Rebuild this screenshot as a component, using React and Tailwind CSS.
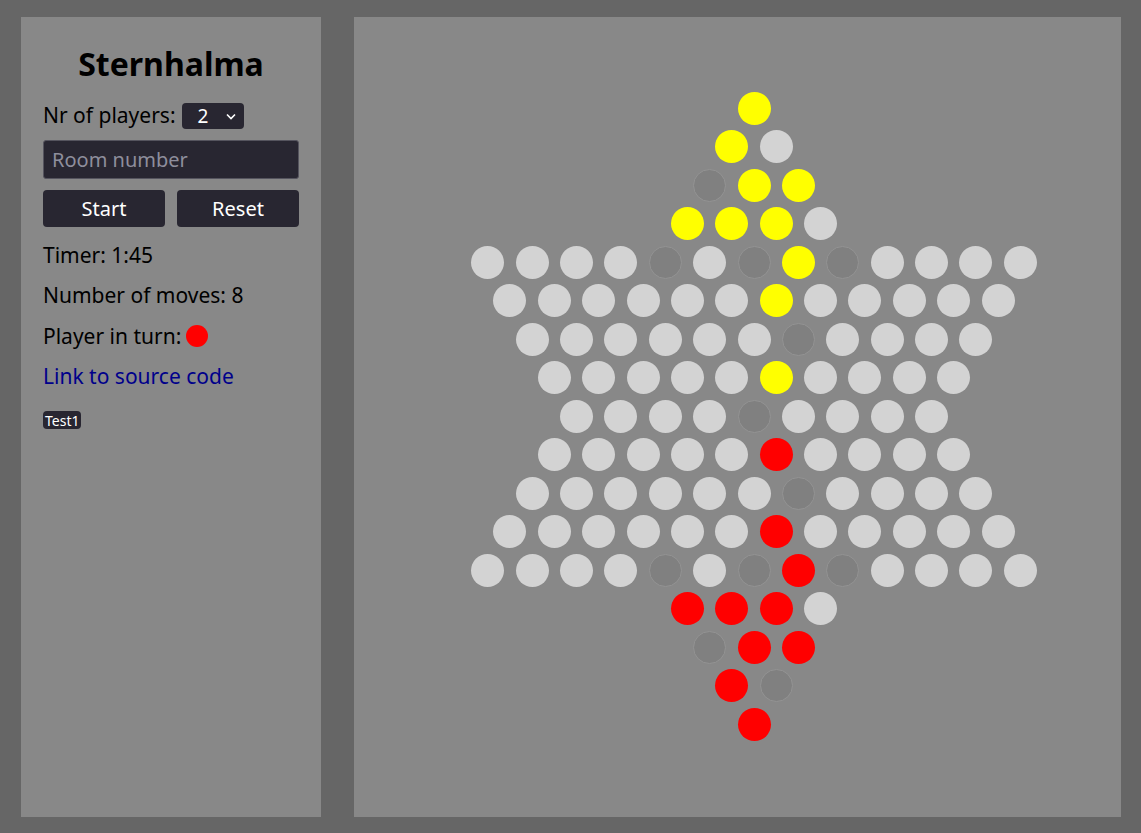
import React from 'react';

// board rows: Y yellow, R red, L free spot, D empty hole
const rows = [
    'Y',
    'YL',
    'DYY',
    'YYYL',
    'LLLLDLDYDLLLL',
    'LLLLLLYLLLLL',
    'LLLLLLDLLLL',
    'LLLLLYLLLL',
    'LLLLDLLLL',
    'LLLLLRLLLL',
    'LLLLLLDLLLL',
    'LLLLLLRLLLLL',
    'LLLLDLDRDLLLL',
    'RRRL',
    'DRR',
    'RD',
    'R',
];

const cellClass = {
    Y: 'bg-[#ffff00]',
    R: 'bg-[#ff0000]',
    L: 'bg-[#d3d3d3]',
    D: 'bg-[#808080] border border-[#939393]',
};

const Board = () => (
    <div className="flex-1 bg-[#888888] flex flex-col items-center justify-center gap-[5.5px] pl-[33px] pb-[2px]">
        {rows.map((row, i) => (
            <div key={i} className="flex gap-[11.4px]">
                {row.split('').map((c, j) => (
                    <div key={j} className={`w-[33px] h-[33px] rounded-full ${cellClass[c]}`} />
                ))}
            </div>
        ))}
    </div>
);

const Sidebar = () => (
    <div className="w-[300px] bg-[#888888] px-[22px] pt-[25px] text-[21px] text-black">
        <h1 className="text-[32px] font-bold text-center leading-[44px]">Sternhalma</h1>

        <div className="mt-[16px] h-[28px] flex items-center gap-[6px]">
            <span>Nr of players:</span>
            <div className="h-[26px] w-[62px] rounded-[4px] bg-[#282631] text-white flex items-center pl-[16px] pr-[8px] justify-between text-[19px]">
                <span>2</span>
                <svg width="10" height="7" viewBox="0 0 10 7" fill="none" stroke="white" strokeWidth="1.6">
                    <path d="M1 1.5 L5 5.5 L9 1.5" />
                </svg>
            </div>
        </div>

        <div className="mt-[10px] h-[39px] rounded-[3px] bg-[#282631] border border-[#55545e] flex items-center px-[8px] text-[20px] text-[#8e8e9c]">
            Room number
        </div>

        <div className="mt-[11px] flex gap-[12px]">
            <button className="flex-1 h-[37px] rounded-[4px] bg-[#282631] text-white text-[20px]">Start</button>
            <button className="flex-1 h-[37px] rounded-[4px] bg-[#282631] text-white text-[20px]">Reset</button>
        </div>

        <div className="mt-[8px] h-[40.5px] flex items-center">Timer: 1:45</div>
        <div className="h-[40.5px] flex items-center">Number of moves: 8</div>
        <div className="h-[40.5px] flex items-center gap-[5px]">
            <span>Player in turn:</span>
            <span className="w-[22px] h-[22px] rounded-full bg-[#ff0000]" />
        </div>
        <div className="h-[40.5px] flex items-center">
            <a className="text-[#00008b]">Link to source code</a>
        </div>

        <div className="mt-[14px] inline-flex h-[18px] items-center rounded-[4px] bg-[#282631] text-white text-[14px] px-[2px]">
            Test1
        </div>
    </div>
);

const App = () => (
    <div className="w-[1141px] h-[833px] bg-[#666666] flex gap-[33px] pt-[17px] pb-[16px] pl-[21px] pr-[20px] font-['Noto_Sans','Open_Sans',sans-serif]">
        <Sidebar />
        <Board />
    </div>
);

export default App;
